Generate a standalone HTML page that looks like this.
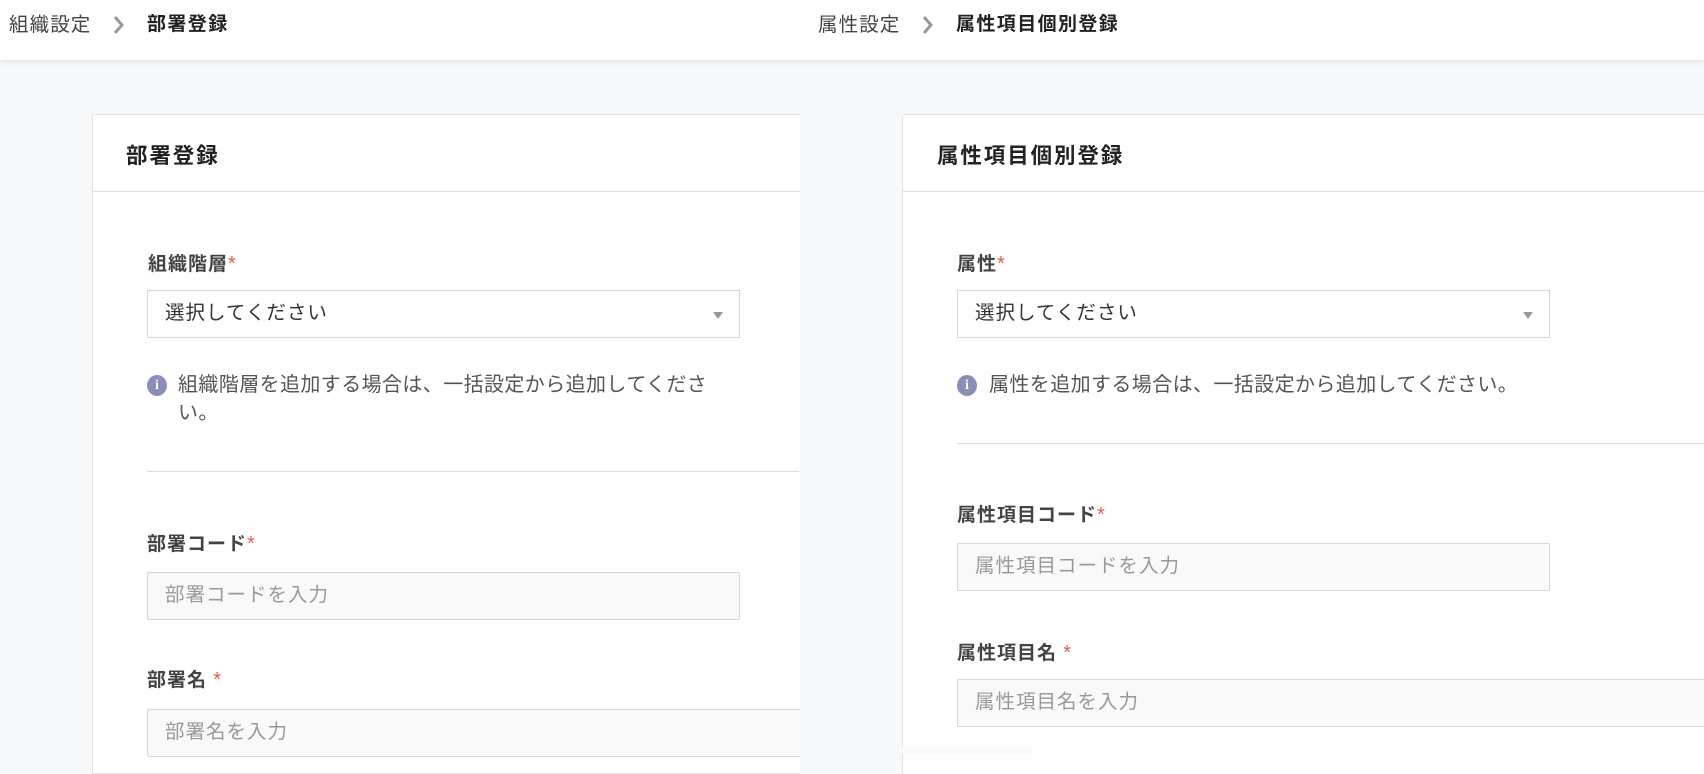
<!DOCTYPE html>
<html><head><meta charset="utf-8"><style>
*{margin:0;padding:0;box-sizing:border-box}
body{width:1704px;height:754px;overflow:hidden;background:#f7f8fa;font-family:"Liberation Sans","Noto Sans CJK JP",sans-serif;position:relative;color:#333}
.a{position:absolute;white-space:nowrap}
.hdr{position:absolute;left:0;top:0;width:1704px;height:60px;background:#fff;box-shadow:0 2px 6px rgba(0,0,0,.08)}
.bc{font-size:19.5px;letter-spacing:1.1px;color:#444;top:12px;line-height:26px}
.bcb{font-weight:bold;color:#222;font-size:19px;letter-spacing:1.4px}
.chev{top:14px}
.card{position:absolute;background:#fff;border:1px solid #e2e2e6;border-radius:3px}
.ch{position:absolute;left:0;right:0;top:0;height:77px;border-bottom:1px solid #ddd}
.title{font-size:21.5px;letter-spacing:1.9px;font-weight:bold;color:#222;top:24px}
.lbl{font-size:19px;letter-spacing:1px;font-weight:bold;color:#444}
.req{color:#e05a5a;font-weight:normal;font-size:20px}
.sel{position:absolute;background:#fff;border:1px solid #d6d6d6;height:48px;font-size:19.5px;letter-spacing:1px;color:#333;padding:0 17px;line-height:45px}
.sel:after{content:"";position:absolute;right:16px;top:21px;border:5px solid transparent;border-top:7px solid #999;border-bottom:0}
.inp{position:absolute;background:#f9f9f9;border:1px solid #d6d6d6;border-radius:2px;height:48px;font-size:19.5px;letter-spacing:1px;color:#999;padding:0 17px;line-height:45px}
.info{font-size:20px;letter-spacing:0.4px;color:#555;line-height:28px}
.ic{position:absolute;width:20px;height:21px;border-radius:50%;background:#8a8fb8;color:#fff;font-size:14px;font-weight:bold;text-align:center;line-height:21px;font-family:"Liberation Serif",serif}
.div{position:absolute;height:1px;background:#ddd}
</style></head><body>
<div class="hdr"></div>
<div class="a bc" style="left:9px">組織設定</div>
<svg class="a chev" style="left:112px" width="14" height="22" viewBox="0 0 14 22"><path d="M3 3 L10 11 L3 19" fill="none" stroke="#999" stroke-width="3"/></svg>
<div class="a bc bcb" style="left:147px">部署登録</div>
<div class="a bc" style="left:818px">属性設定</div>
<svg class="a chev" style="left:921px" width="14" height="22" viewBox="0 0 14 22"><path d="M3 3 L10 11 L3 19" fill="none" stroke="#999" stroke-width="3"/></svg>
<div class="a bc bcb" style="left:956px">属性項目個別登録</div>

<div class="card" style="left:92px;top:114px;width:708px;height:660px;border-right:none;border-radius:3px 0 0 0">
 <div class="ch"></div>
 <div class="a title" style="left:33px">部署登録</div>
</div>
<div class="a lbl" style="left:148px;top:249px">組織階層<span class="req">*</span></div>
<div class="sel" style="left:147px;top:290px;width:593px">選択してください</div>
<div class="ic" style="left:147px;top:375px">i</div>
<div class="a info" style="left:178px;top:371px;white-space:normal;width:545px">組織階層を追加する場合は、一括設定から追加してください。</div>
<div class="div" style="left:147px;top:471px;width:652px"></div>
<div class="a lbl" style="left:147px;top:529px">部署コード<span class="req">*</span></div>
<div class="inp" style="left:147px;top:572px;width:593px">部署コードを入力</div>
<div class="a lbl" style="left:147px;top:665px">部署名 <span class="req">*</span></div>
<div class="inp" style="left:147px;top:709px;width:653px;border-right:none">部署名を入力</div>

<div class="card" style="left:902px;top:114px;width:820px;height:660px;border-bottom:none">
 <div class="ch"></div>
 <div class="a title" style="left:34px">属性項目個別登録</div>
</div>
<div class="a" style="left:902px;top:747px;width:131px;height:7px;background:#fbfbfb"></div>
<div class="a lbl" style="left:957px;top:249px">属性<span class="req">*</span></div>
<div class="sel" style="left:957px;top:290px;width:593px">選択してください</div>
<div class="ic" style="left:957px;top:375px">i</div>
<div class="a info" style="left:989px;top:371px">属性を追加する場合は、一括設定から追加してください。</div>
<div class="div" style="left:957px;top:443px;width:747px"></div>
<div class="a lbl" style="left:957px;top:500px">属性項目コード<span class="req">*</span></div>
<div class="inp" style="left:957px;top:543px;width:593px">属性項目コードを入力</div>
<div class="a lbl" style="left:957px;top:638px">属性項目名 <span class="req">*</span></div>
<div class="inp" style="left:957px;top:679px;width:760px">属性項目名を入力</div>
</body></html>
